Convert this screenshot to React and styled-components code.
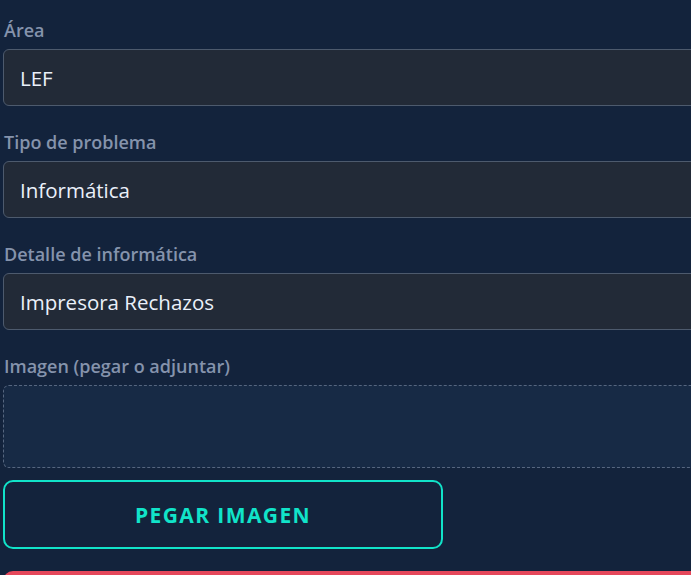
import React from 'react';
import styled, { createGlobalStyle } from 'styled-components';

const Global = createGlobalStyle`
  html, body {
    margin: 0;
    padding: 0;
    background: #13233c;
    overflow: hidden;
  }
  body {
    font-family: 'Open Sans', 'Noto Sans', sans-serif;
  }
`;

const Form = styled.div`
  width: 760px;
  padding: 19px 0 0 3px;
  display: flex;
  flex-direction: column;
`;

const Field = styled.div`
  display: flex;
  flex-direction: column;
  margin-bottom: ${(p) => (p.$last ? 0 : 25)}px;
`;

const Label = styled.label`
  font-size: 18px;
  font-weight: 600;
  color: #8593ac;
  margin: 0 0 8px 1px;
  line-height: 22px;
`;

const Select = styled.div`
  height: 57px;
  box-sizing: border-box;
  border: 1px solid #4d5a6d;
  border-radius: 6px;
  background: #222a37;
  color: #eaf0fa;
  font-size: 20.5px;
  padding: 0 16px;
  display: flex;
  align-items: center;
`;

const Drop = styled.div`
  height: 83px;
  box-sizing: border-box;
  border: 1px dashed #56667f;
  border-radius: 6px;
  background: #172a45;
`;

const PasteButton = styled.button`
  width: 440px;
  height: 69px;
  box-sizing: border-box;
  background: transparent;
  border: 2px solid #11e3c9;
  border-radius: 10px;
  color: #11e3c9;
  font-family: 'Open Sans', 'Noto Sans', sans-serif;
  font-size: 21px;
  font-weight: 700;
  letter-spacing: 1.4px;
  cursor: pointer;
  margin-top: 12px;
`;

const SubmitBar = styled.div`
  width: 700px;
  height: 60px;
  margin-top: 22px;
  background: #e5485b;
  border-radius: 10px;
`;

const fields = [
  { label: 'Área', value: 'LEF' },
  { label: 'Tipo de problema', value: 'Informática' },
  { label: 'Detalle de informática', value: 'Impresora Rechazos' },
];

export default function App() {
  return (
    <>
      <Global />
      <Form>
        {fields.map((f) => (
          <Field key={f.label}>
            <Label>{f.label}</Label>
            <Select>{f.value}</Select>
          </Field>
        ))}
        <Field $last>
          <Label>Imagen (pegar o adjuntar)</Label>
          <Drop />
        </Field>
        <PasteButton>PEGAR IMAGEN</PasteButton>
        <SubmitBar />
      </Form>
    </>
  );
}
